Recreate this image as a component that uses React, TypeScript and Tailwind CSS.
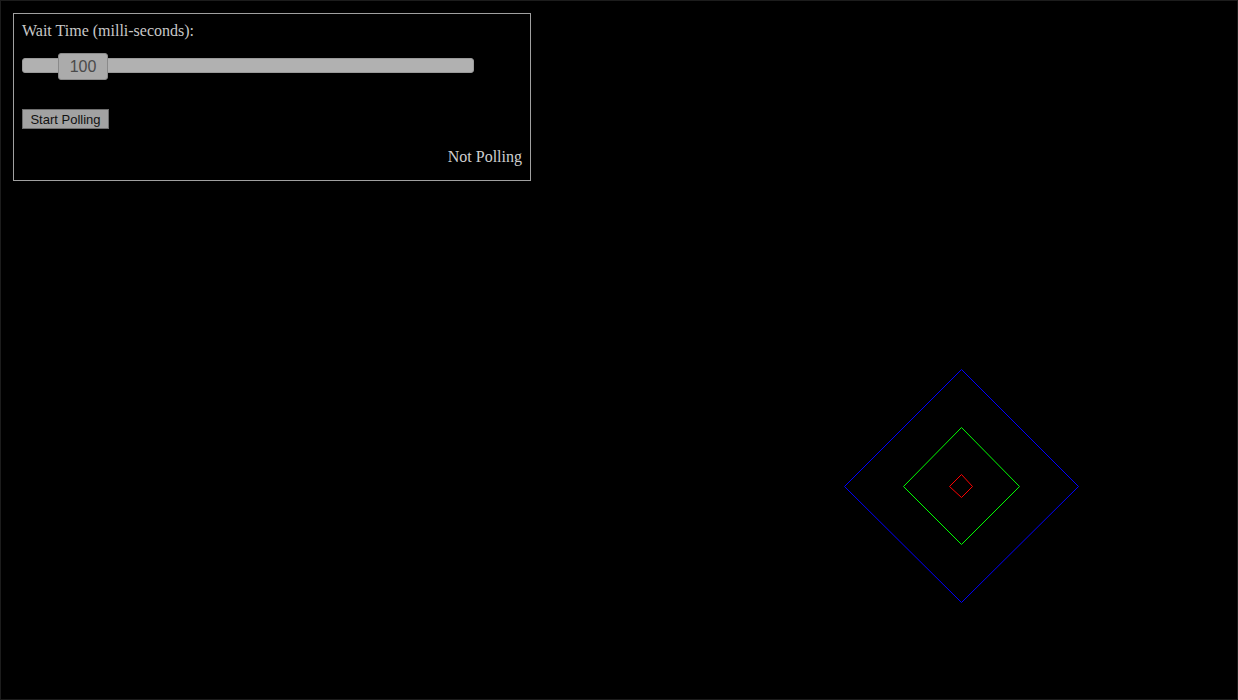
export default function App() {
  return (
    <div className="relative w-[1238px] h-[700px] bg-black border border-[#1c1c1c] overflow-hidden">
      {/* polling control panel */}
      <div className="relative z-10 ml-[12px] mt-[12px] w-[518px] h-[168px] border border-[#a0a0a0] px-[8px] pt-[8px] font-['Liberation_Serif',serif] text-[#c8c8c8]">
        <div className="text-[16px] leading-[18px]">Wait Time (milli-seconds):</div>
        <div className="relative mt-[13px] h-[27px] w-[452px]">
          <div className="absolute left-0 right-0 top-[5px] h-[15px] rounded-[3px] bg-[#b1b1b1] border border-[#9a9a9a]" />
          <div className="absolute left-[36px] top-0 h-[27px] w-[50px] rounded-[3px] bg-[#ababab] border border-[#8a8a8a] flex items-center justify-center font-['Liberation_Sans',sans-serif] text-[16px] text-[#4a4a4a]">
            100
          </div>
        </div>
        <button className="mt-[29px] block h-[20px] w-[87px] bg-[#a2a2a2] border border-[#6e6e6e] font-['Liberation_Sans',sans-serif] text-[13px] leading-[17px] text-[#111]">
          Start Polling
        </button>
        <div className="mt-[18px] text-right text-[16px] leading-[20px] text-[#cfcfcf]">Not Polling</div>
      </div>

      {/* canvas */}
      <svg className="absolute left-0 top-0" width="1238" height="700" viewBox="0 0 1238 700">
        <polygon points="960.5,368.5 1077.5,485.5 960.5,601.5 843.5,485.5" fill="none" stroke="#0000ff" strokeWidth="1" />
        <polygon points="960.5,426.5 1018.5,485.5 960.5,543.5 902.5,485.5" fill="none" stroke="#00ff00" strokeWidth="1" />
        <polygon points="960.5,473.5 971.5,485.5 960.5,496.5 948.5,485.5" fill="none" stroke="#ff0000" strokeWidth="1" />
      </svg>
    </div>
  );
}
